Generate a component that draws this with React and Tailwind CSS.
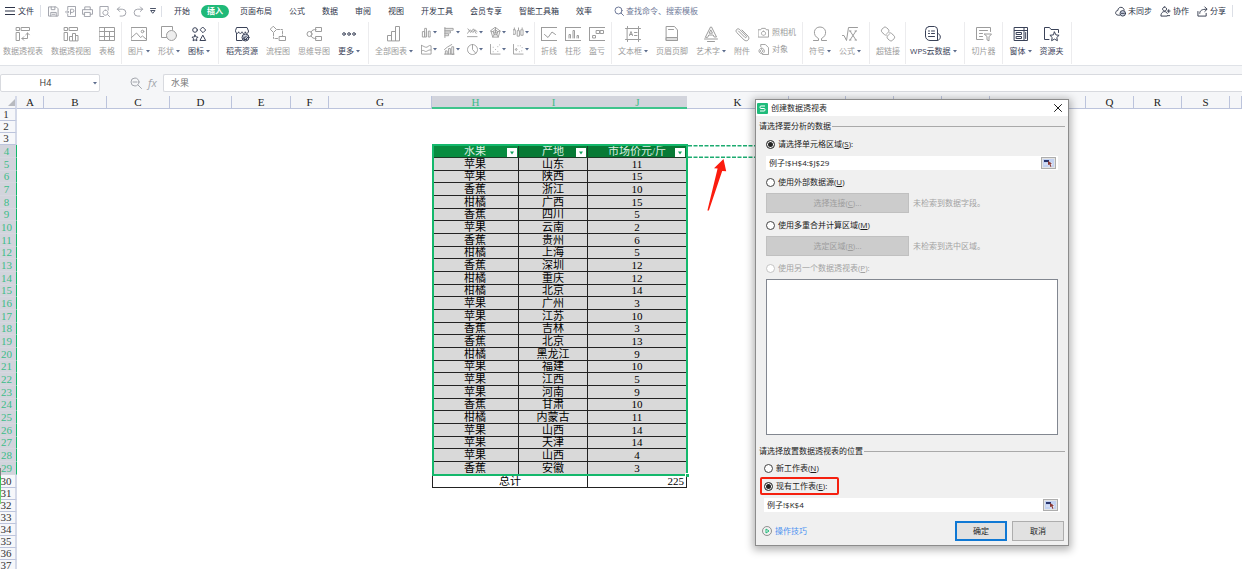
import clsx from "clsx";

const rows = [
  ["苹果", "山东", 11],
  ["苹果", "陕西", 15],
  ["香蕉", "浙江", 10],
  ["柑橘", "广西", 15],
  ["香蕉", "四川", 5],
  ["苹果", "云南", 2],
  ["香蕉", "贵州", 6],
  ["柑橘", "上海", 5],
  ["香蕉", "深圳", 12],
  ["柑橘", "重庆", 12],
  ["柑橘", "北京", 14],
  ["苹果", "广州", 3],
  ["苹果", "江苏", 10],
  ["香蕉", "吉林", 3],
  ["香蕉", "北京", 13],
  ["柑橘", "黑龙江", 9],
  ["苹果", "福建", 10],
  ["苹果", "江西", 5],
  ["苹果", "河南", 9],
  ["香蕉", "甘肃", 10],
  ["柑橘", "内蒙古", 11],
  ["苹果", "山西", 14],
  ["苹果", "天津", 14],
  ["苹果", "山西", 4],
  ["香蕉", "安徽", 3],
];

const columns = [
  { name: "A", width: "w-[27px]" },
  { name: "B", width: "w-[63px]" },
  { name: "C", width: "w-[63px]" },
  { name: "D", width: "w-[62px]" },
  { name: "E", width: "w-[59px]" },
  { name: "F", width: "w-[38px]" },
  { name: "G", width: "w-[103px]" },
  { name: "H", width: "w-[87px]", selected: true },
  { name: "I", width: "w-[69px]", selected: true },
  { name: "J", width: "w-[99px]", selected: true },
  { name: "K", width: "w-[102px]" },
  // L to P stay unlabelled, they sit under the dialog
  { name: "", width: "w-[57px]" },
  { name: "", width: "w-[48px]" },
  { name: "", width: "w-[48px]" },
  { name: "", width: "w-[48px]" },
  { name: "", width: "w-[96px]" },
  { name: "Q", width: "w-[48px]" },
  { name: "R", width: "w-[48px]" },
  { name: "S", width: "w-[48px]" },
  { name: "", width: "w-auto" },
];

function Svg({ className = "w-4 h-4", box = "0 0 16 16", children }) {
  return (
    <svg
      className={clsx("shrink-0", className)}
      viewBox={box}
      fill="none"
      stroke="currentColor"
      strokeWidth="1"
      strokeLinecap="round"
      strokeLinejoin="round"
      aria-hidden="true"
    >
      {children}
    </svg>
  );
}

function Caret() {
  return (
    <svg className="w-1 h-1 shrink-0" viewBox="0 0 4 4" aria-hidden="true">
      <path d="M0 1h4L2 3.4z" fill="#5b6b8c" />
    </svg>
  );
}

const icons = {
  pivotTable: (
    <>
      <path d="M1.5 1.5h3v3h-3zM6.5 1.5h8v3h-8zM1.5 6.5h3v8h-3z" />
      <path d="M7 12.5h5.5V7M8.8 10.7 7 12.5l1.8 1.8M10.7 8.8 12.5 7l1.8 1.8" />
    </>
  ),
  pivotChart: (
    <>
      <path d="M1.5 1.5h3v3h-3zM6.5 1.5h8v3h-8zM1.5 6.5h3v8h-3z" />
      <path d="M6.5 14.5v-4h3v4zM9.5 14.5v-7h3v7zM12.5 14.5V9.5h2.5v5z" />
    </>
  ),
  table: <path d="M.5 1.5h15v13H.5zM.5 5.5h15M.5 10.5h15M5.5 1.5v13M10.5 5.5v9" />,
  picture: (
    <>
      <path d="M.5 1.5h15v13H.5z" />
      <path d="m.5 11.5 5-4.5 4 4.5 2-1.5 4 3.5" />
      <circle cx="11.5" cy="5.5" r="1.3" />
    </>
  ),
  shapes: (
    <>
      <path d="M6 11.5H.5v-11h11v3" />
      <circle cx="10.5" cy="9.5" r="5" fill="#eee" />
    </>
  ),
  iconSet: (
    <>
      <circle cx="4" cy="4" r="2.3" />
      <path d="m12 1.3 2.7 2.7L12 6.7 9.3 4z" />
      <path d="m4 9 .9 1.900 2.100.3-1.500 1.500.4 2.100L4 13.800l-1.900 1 .4-2.100L1 11.200l2.100-.3zM12 9.500l2.700 5H9.300z" />
    </>
  ),
  store: (
    <>
      <path d="M2.5 7.5v7H8M3 1.5h10l1.5 3.5c0 3-3 3-3.200.8C11 8 8.200 8 8 5.800 7.800 8 5 8 4.700 5.800 4.500 8 1.500 8 1.500 5z" />
      <circle cx="11.5" cy="11.5" r="3.5" fill="#cdd2dd" />
      <path d="m9.5 13 3-3M11 14l3-3M10 11v2.5h2.5" />
    </>
  ),
  flow: (
    <>
      <path d="M3.5.5l3 3-3 3-3-3zM9.5 10.5h6v4h-6z" />
      <path d="M7.5 3.5h5V9.5M3.5 7.5v5h5" strokeDasharray="2 1.5" />
    </>
  ),
  mind: (
    <>
      <circle cx="3.5" cy="8" r="2.5" />
      <path d="M10 1.5h5.5v4H10zM10 10.5h5.5v4H10zM5 6c1-2 2.5-2.5 5-2.5M5 10c1 2 2.5 2.5 5 2.5" />
    </>
  ),
  more: (
    <>
      <circle cx="3" cy="8" r="1.3" />
      <circle cx="8" cy="8" r="1.3" />
      <circle cx="13" cy="8" r="1.3" />
    </>
  ),
  bars: <path d="M1.5 14.5v-5h4v5zM5.5 14.5V5.5h4v9zM9.5 14.5V.5h4v14z" />,
  sparkLine: <path d="M0 1.5h16M.5 1.5v13M0 14.5h16M3.5 8.5 7 11.5l4-5.5 3.5 2.5" />,
  sparkBar: <path d="M0 1.5h16M.5 1.5v13M0 14.5h16M4 12V8.5h1.5V12M8 12V4.5h1.5V12M12 12V9.5h1.5V12" />,
  winLoss: <path d="M0 1.5h16M.5 1.5v13M0 14.5h16M4 9.5h2.5V12H4zM7.5 4.5h3v3h-3zM11.5 4.5h3v3h-3z" />,
  textBox: (
    <>
      <path d="M2.5 2.5h11v11h-11zM.5 2.5h2v-2M15.5 2.5h-2v-2M.5 13.5h2v2M15.5 13.5h-2v2" />
      <path d="M4.5 9.5 6 5.5l1.5 4M5 8.5h2M9.5 6.5h2.5M9.5 9.5h2.5" />
    </>
  ),
  headerFooter: (
    <>
      <path d="M2.5.5H10.5L13.5 4v10.5h-11z" />
      <path d="M4.5 3.5h5M2.5 11.5h11v3h-11z" fill="#ddd" />
    </>
  ),
  wordArt: <path d="M2.5 11 7.5 1h1l5 10h-2.3l-1-2H5.8l-1 2zM6.5 7.2h3L8 4.2zM1.5 13h13M4.5 15.5h7" />,
  clip: <path d="m4.5 5 6.300 6.300c1 1 2.300-.3 1.400-1.300L5.700 3.500c-2-2-5 .8-3 3l7.300 7.300c3 2.700 6.500-.8 4-3.700L8 4" />,
  omega: <path d="M1.5 14.5h5v-2C.2 9.500 1.500 1 8 1s7.800 8.500 1.500 11.500v2h5" />,
  formula: <path d="M.5 9.5H2L4.5 14.5 6.5 1.5H15.5M8 5l6 9M14 5 8 14M7.5 5H9M13 5h1.5M7.5 14H9M13 14h1.5" />,
  link: (
    <>
      <path d="M7 7.500 8.200 6.300c1-1 .9-2.200 0-3.100L6.500 1.700C5.500.8 4.300.9 3.500 1.700L2 3.300c-.9.9-.8 2.200.1 3.100l2.400 2.200c.7.6 1.500.7 2.200.4" />
      <path d="M9 8.500 7.800 9.700c-1 1-.9 2.200 0 3.100l1.700 1.500c1 .9 2.200.8 3 0l1.500-1.600c.9-.9.8-2.200-.1-3.100l-2.400-2.200c-.7-.6-1.500-.7-2.200-.4" />
    </>
  ),
  cloudData: (
    <>
      <path d="M4 .5h5.500a3.500 3.500 0 0 1 3 3.500v10.500H5a4.500 4.500 0 0 1-4.500-4.500V4.500a4 4 0 0 1 3.500-4zM12.500 7.500c4 .3 4 7-.5 7" />
      <path d="M3.500 5h1M6.500 5h3M3.500 7.500h1M6.500 7.500h3M3.500 10.500h6" />
    </>
  ),
  slicer: (
    <>
      <path d="M7 13.5H.5V1.5h14v4M3.5 4.5h8M3.5 7.5h3M3.5 10.5h3" />
      <path d="M8.5 8h7l-2.5 2.8v4l-2-1v-3z" />
    </>
  ),
  form: (
    <>
      <path d="M1.5 1.5h13v13h-13zM1.5 4.5h13M11 1.5v13M12.7 6.5v6" />
      <path d="M3.5 6.5h5v2h-5zM3.5 10.5h5v2h-5z" />
    </>
  ),
  folder: (
    <>
      <path d="M5 13.5H.5v-12h5l1.5 2h7.5v3" />
      <path d="m10.5 6 1.400 2.900 3.200.4-2.300 2.200.6 3.200-2.900-1.600-2.900 1.600.6-3.200-2.300-2.200 3.200-.4z" />
    </>
  ),
};

const miniIcons = [
  <path d="M1.5 10.5V5h2.5v5.5zM4 10.5V1.5h2v9zM8 10.5v-6h2v6z" />,
  <path d="M1 .5v11M1 1.5h9v2H1M1 4.5h6v2H1M1 7.5h4v2H1" />,
  <path d="m.5 7 3-4 3 3 2-3 2.5 2M1 2l3 4 3-4 3 5M.5 10.5h10.5" />,
  <path d="m6 .5 5 3.8L9 11H3L1 4.3zM6 3l2.5 2-1 3.5h-3L3.5 5zM6 .5V6l5-1.5M6 6l3 5M6 6l-3 5M6 6 1 4.5" />,
  <path d="M1.5 1v2M.5 3h2v5h-2zM6 1v2M5 4h2v6H5zM10 1v1M9 3h2v6H9z" />,
  <path d="M.5 1.5v9.500h10.500v-9C8 .5 7.500 4.500 5 3.500S2 2 .5 1.500M.5 8c2-3 3.500 1 5.500 0s3-2 5-1.500" />,
  <path d="M1.5 11V7.5h2V11M5 11V5h2v6M8.5 11V3h2v8zM.5 6l3-2.5L8.5.5M.5 11h10.5" />,
  <path d="M6 .5a5.500 5.500 0 1 0 .01 0M6 .5V6l3.500 4" />,
  <path d="M.5.5V11H11M3.5 8.5v.01M6 6v.01M3.5 3.5v.01M8.5 8v.01M8.5 3v.01M10.5 1v.01" />,
  <path d="M.5.5V11H11M3.500 5a1 1 0 1 0 .01 0M8 2v.01M7 8.500v.01M9.500 7.500v.01M10 4v.01M5.500 2v.01" />,
];

const tabsBefore = ["开始"];
const tabsAfter = ["页面布局", "公式", "数据", "审阅", "视图", "开发工具", "会员专享", "智能工具箱", "效率"];

function Tool({ icon, label, menu, active }) {
  return (
    <button
      className={clsx(
        "flex flex-col items-center gap-1 whitespace-nowrap",
        active ? "text-[#3a4258]" : "text-[#9c9c9c]"
      )}
    >
      <Svg>{icons[icon]}</Svg>
      <span className="flex items-center gap-[2px] text-[8px] leading-[10px]">
        {label}
        {menu && <Caret />}
      </span>
    </button>
  );
}

function Group({ className, children }) {
  return (
    <div className={clsx("flex items-start gap-2 pt-1 h-[42px] shrink-0 border-r border-[#ececee]", className)}>
      {children}
    </div>
  );
}

function TitleBar() {
  return (
    <header className="flex items-center h-[22px] text-[8px] leading-[12px] whitespace-nowrap text-[#2d3448]">
      <button className="flex items-center gap-[3px] pl-[5px] pr-1.5 border-r border-[#dcdfe6]">
        <Svg className="w-2.5 h-2.5" box="0 0 10 10">
          <path d="M0 1.5h10M0 5h10M0 8.5h10" />
        </Svg>
        文件
      </button>
      <div className="flex items-center gap-[6px] pl-[7px] pr-[5px] text-[#9a9da5] border-r border-[#dcdfe6]">
        <button aria-label="保存">
          <Svg className="w-[11px] h-[11px]" box="0 0 12 12">
            <path d="M1 1h8l2 2v8H1zM3.5 1v3h4V1M3 11V7h6v4M4.5 9h3" />
          </Svg>
        </button>
        <button aria-label="输出">
          <Svg className="w-[11px] h-[11px]" box="0 0 12 12">
            <path d="M3 4V.5h8.500v11H3V9M0 6.500h4M2.500 5 4 6.500 2.500 8M6 9V3.500h2a1.500 1.500 0 0 1 0 3.500H6" />
          </Svg>
        </button>
        <button aria-label="打印">
          <Svg className="w-[11px] h-[11px]" box="0 0 12 12">
            <path d="M3 4V1h6v3M3 9H.5V4h11v5H9M3 7h6v4.5H3z" />
          </Svg>
        </button>
        <button aria-label="打印预览">
          <Svg className="w-[11px] h-[11px]" box="0 0 12 12">
            <path d="M5 11.500H1V.5h9v4M9.500 9.500l2 2M7 4.500a2.800 2.800 0 1 0 .01 0" />
          </Svg>
        </button>
        <button aria-label="撤销">
          <Svg className="w-[11px] h-[11px]" box="0 0 12 12">
            <path d="M4 1 1.500 3.500 4 6M1.500 3.500H7a3.500 3.500 0 0 1 0 7.500H4.500" />
          </Svg>
        </button>
        <button aria-label="重做">
          <Svg className="w-[11px] h-[11px]" box="0 0 12 12">
            <path d="m8 1 2.500 2.500L8 6M10.500 3.500H5A3.500 3.500 0 0 0 5 11h2.500" />
          </Svg>
        </button>
        <button aria-label="自定义" className="text-[#4c5468]">
          <Svg className="w-[6px] h-[6px]" box="0 0 6 6">
            <path d="M.5.5h5M1 2.5h4L3 5z" />
          </Svg>
        </button>
      </div>
      <nav className="flex items-center gap-[5px] pl-[6px]">
        {tabsBefore.map((tab) => (
          <button key={tab} className="px-1.5">
            {tab}
          </button>
        ))}
        <button className="px-1.5 h-[13px] rounded-full bg-[#1fb978] text-white font-bold">插入</button>
        {tabsAfter.map((tab) => (
          <button key={tab} className="px-1.5">
            {tab}
          </button>
        ))}
      </nav>
      <label className="flex items-center gap-[2px] pl-4 text-[#6f7a99]">
        <Svg className="w-[10px] h-[10px]" box="0 0 10 10">
          <circle cx="4.5" cy="4.5" r="3.5" />
          <path d="m7 7 2.5 2.5" />
        </Svg>
        <input
          aria-label="搜索"
          placeholder="查找命令、搜索模板"
          className="w-20 outline-none placeholder:text-[#6f7a99] placeholder:opacity-100"
        />
      </label>
      <div className="flex items-center gap-2 ml-auto mr-[9px] pr-1.5 border-r border-[#dcdfe6]">
        <button className="flex items-center gap-[2px]">
          <Svg className="w-[11px] h-[11px]" box="0 0 12 12">
            <path d="M5 10H3.5C-.3 10 0 5 3 5c.3-5 7-4.5 7-.5" />
            <circle cx="8.5" cy="8" r="3" fill="#cfd5e4" />
            <path d="M7 8h3" />
          </Svg>
          未同步
        </button>
        <button className="flex items-center gap-[2px]">
          <Svg className="w-[11px] h-[11px]" box="0 0 12 12">
            <path d="M5 1a2.200 2.200 0 1 0 .01 0M7.500 11H1c0-6 6-6 7-3M9.500 4v3M8 5.500h3M8 10.500h2.500" />
          </Svg>
          协作
        </button>
        <button className="flex items-center gap-[2px]">
          <Svg className="w-[11px] h-[11px]" box="0 0 12 12">
            <path d="M1 6v5h9V8M3 8c0-3 2-4.5 7.5-4.5M8.5 1 11 3.5 8.5 6" />
          </Svg>
          分享
        </button>
      </div>
    </header>
  );
}

function Ribbon() {
  return (
    <div className="flex h-[44px] border-b border-[#dfe2e7]">
      <Group className="pl-[3px] pr-1.5">
        <Tool icon="pivotTable" label="数据透视表" />
        <Tool icon="pivotChart" label="数据透视图" />
        <Tool icon="table" label="表格" />
      </Group>
      <Group className="pl-1.5 pr-2">
        <Tool icon="picture" label="图片" menu />
        <Tool icon="shapes" label="形状" menu />
        <Tool icon="iconSet" label="图标" menu active />
      </Group>
      <Group className="pl-[7px] pr-2">
        <Tool icon="store" label="稻壳资源" active />
        <Tool icon="flow" label="流程图" />
        <Tool icon="mind" label="思维导图" />
        <Tool icon="more" label="更多" menu active />
      </Group>
      <Group className="pl-1.5 pr-[5px]">
        <Tool icon="bars" label="全部图表" menu />
        <div className="grid grid-cols-5 gap-x-[7px] gap-y-[5px] text-[#9c9c9c]">
          {miniIcons.map((shape, i) => (
            <button key={i} aria-label={`图表 ${i + 1}`} className="flex items-center gap-px w-4 h-3">
              <Svg className="w-[11px] h-[11px]" box="0 0 12 12">
                {shape}
              </Svg>
              <Caret />
            </button>
          ))}
        </div>
      </Group>
      <Group className="pl-1.5 pr-1.5">
        <Tool icon="sparkLine" label="折线" />
        <Tool icon="sparkBar" label="柱形" />
        <Tool icon="winLoss" label="盈亏" />
      </Group>
      <Group className="pl-1.5 pr-1.5">
        <Tool icon="textBox" label="文本框" menu />
        <Tool icon="headerFooter" label="页眉页脚" />
        <Tool icon="wordArt" label="艺术字" menu />
        <Tool icon="clip" label="附件" />
        <div className="flex flex-col gap-[5px] text-[8px] leading-3 text-[#9c9c9c]">
          <button className="flex items-center gap-[3px]">
            <Svg className="w-[11px] h-[11px]" box="0 0 12 12">
              <path d="M.5 3H3l1-1.500h4L9 3h2.500v8H.5zM6 4.500a2.300 2.300 0 1 0 .01 0" />
            </Svg>
            照相机
          </button>
          <button className="flex items-center gap-[3px]">
            <Svg className="w-[11px] h-[11px]" box="0 0 12 12">
              <path d="M3 3V.5h5L11.500 4v7.500H5M4 4.500a3 3 0 1 0 .01 0M2.500 7.500 4 6l1.500 1.500L4 9z" />
            </Svg>
            对象
          </button>
        </div>
      </Group>
      <Group className="pl-1.5 pr-2">
        <Tool icon="omega" label="符号" menu />
        <Tool icon="formula" label="公式" menu />
      </Group>
      <Group className="pl-1.5 pr-[5px]">
        <Tool icon="link" label="超链接" />
      </Group>
      <Group className="pl-1 pr-[7px]">
        <Tool icon="cloudData" label="WPS云数据" menu active />
      </Group>
      <Group className="pl-[7px] pr-1.5">
        <Tool icon="slicer" label="切片器" />
      </Group>
      <Group className="pl-[7px] pr-[7px]">
        <Tool icon="form" label="窗体" menu active />
        <Tool icon="folder" label="资源夹" active />
      </Group>
    </div>
  );
}

function FormulaBar() {
  return (
    <div className="flex items-center h-[30px] pb-[1px] pt-1 bg-[#f5f6f8] text-[9px] leading-3">
      <div className="flex items-center w-[100px] h-[18px] pr-[2px] bg-white border border-[#d8dadf] rounded-[2px]">
        <input
          aria-label="名称框"
          defaultValue="H4"
          className="flex-1 min-w-0 pr-[3px] text-center text-[#333] outline-none"
        />
        <Caret />
      </div>
      <div className="flex items-center gap-1.5 pl-[30px] pr-[5px] text-[#a3a6ad]">
        <Svg className="w-3 h-3" box="0 0 12 12">
          <circle cx="5" cy="5" r="4" />
          <path d="m8 8 3.5 3.5M3 5h4" />
        </Svg>
        <i className="w-2.5 font-['Open_Sans',sans-serif] text-[11px]">fx</i>
      </div>
      <input
        aria-label="编辑栏"
        defaultValue="水果"
        className="flex-1 min-w-0 h-[18px] px-[7px] bg-white border border-r-0 border-[#d8dadf] rounded-l-[2px] text-[#777] outline-none"
      />
    </div>
  );
}

function RowHead({ n, children }) {
  const selected = n >= 4 && n <= 29;
  return (
    <th
      scope="row"
      className={clsx(
        "relative p-0 pr-[3px] font-normal border-b",
        selected
          ? "bg-[#d2d4dc] text-[#3cbc88] border-b-[#d6d8e0] border-r border-r-[#14b86c]"
          : "bg-[#f6f7fa] text-[#333] border-b-[#bcc4dc] border-r-2 border-r-[#d4d9e8]"
      )}
    >
      {n}
      {children}
    </th>
  );
}

const dataCell = "p-0 bg-[#d9d9d9] border-b border-r border-[#222] text-center text-black";

function FilterHead({ label, className, children }) {
  return (
    <td className={clsx("relative p-0 border-b border-r border-[#1c3a26] text-center text-[#dcefe2]", className)}>
      {label}
      <button
        aria-label={`筛选${label}`}
        className="absolute right-[1px] top-[3px] flex items-center justify-center w-2.5 h-[9px] bg-white"
      >
        <svg className="w-1 h-1" viewBox="0 0 4 4" aria-hidden="true">
          <path d="M0 .5h4L2 3.5z" fill="#12a35c" />
        </svg>
      </button>
      {children}
    </td>
  );
}

function Sheet() {
  // repeats 13/13/12 inside the data block, as its rows are slightly taller
  const rowHeight = (n) => {
    if (n < 4 || n > 30) return "h-3";
    return (n - 4) % 3 === 2 && n < 30 ? "h-3" : "h-[13px]";
  };

  return (
    <table className="w-full table-fixed border-separate border-spacing-0 text-[11px] leading-[11px] font-['Liberation_Serif','Noto_Sans_CJK_SC',serif]">
      <colgroup>
        <col className="w-[17px]" />
        {columns.map((c, i) => (
          <col key={i} className={c.width} />
        ))}
      </colgroup>
      <thead>
        <tr className="h-[13px] bg-[#f5f6f8]">
          <th className="p-0 border-b border-r-2 border-b-[#bcc4dc] border-r-[#d4d9e8]" aria-label="全选">
            <svg className="w-[7px] h-[7px] ml-auto" viewBox="0 0 7 7" aria-hidden="true">
              <path d="M7 0v7H0z" fill="#b8babf" />
            </svg>
          </th>
          {columns.map((c, i) => (
            <th
              key={i}
              scope="col"
              className={clsx(
                "p-0 pt-px font-normal border-b",
                c.selected
                  ? "bg-[#d2d4dc] text-[#3cbc88] border-[#3fc48c] shadow-[inset_0_-1px_0_#3fc48c]"
                  : "text-[#222] border-r border-[#bcc4dc]"
              )}
            >
              {c.name}
            </th>
          ))}
        </tr>
      </thead>
      <tbody>
        {[1, 2, 3].map((n) => (
          <tr key={n} className={rowHeight(n)}>
            <RowHead n={n} />
            <td colSpan={20} className="p-0" />
          </tr>
        ))}
        <tr className={rowHeight(4)}>
          <RowHead n={4} />
          <td colSpan={7} className="p-0" />
          <FilterHead label="水果" className="bg-[#088c40]">
            {/* selection frame over H4:J29 */}
            <span className="absolute z-10 left-0 -top-px w-[256px] h-[332px] border-2 border-[#14b86c] pointer-events-none">
              <span className="absolute -right-[3px] -bottom-[3px] w-1 h-1 bg-[#14b86c] border-l border-t border-white" />
            </span>
          </FilterHead>
          <FilterHead label="产地" className="bg-[#077a35]" />
          <FilterHead label="市场价元/斤" className="bg-[#077a35]" />
          <td className="relative p-0">
            <svg className="absolute left-0 top-0 w-full h-[13px]" fill="none" stroke="#1cab70" aria-hidden="true">
              <path d="M1 .8h101M1 12.2h101" strokeWidth="1.6" strokeDasharray="4 1.5" />
            </svg>
            <svg className="absolute left-5 top-3.5 w-5 h-[53px]" viewBox="0 0 20 53" aria-hidden="true">
              <path d="M16.5 0 7 9.2l3.6.3L.4 51.5h1.5L15.2 12l4 .2z" fill="#fb1c0e" />
            </svg>
          </td>
          <td colSpan={9} className="p-0" />
        </tr>
        {rows.map(([fruit, place, price], i) => (
          <tr key={i} className={rowHeight(i + 5)}>
            <RowHead n={i + 5}>
              {i === rows.length - 1 && (
                <span className="absolute z-10 left-0 top-1.5 w-px h-9 bg-linear-to-b from-[#808080] from-20% via-[#12c456] via-25% to-[#7be07b]" />
              )}
            </RowHead>
            <td colSpan={7} className="p-0" />
            <td className={dataCell}>{fruit}</td>
            <td className={dataCell}>{place}</td>
            <td className={dataCell}>{price}</td>
            <td colSpan={10} className="p-0" />
          </tr>
        ))}
        <tr className={rowHeight(30)}>
          <RowHead n={30} />
          <td colSpan={7} className="p-0" />
          <td colSpan={2} className="p-0 border border-t-0 border-[#222] text-center">
            总计
          </td>
          <td className="p-0 pr-[2px] border-b border-r border-[#222] text-right">225</td>
          <td colSpan={10} className="p-0" />
        </tr>
        {[31, 32, 33, 34, 35, 36, 37].map((n) => (
          <tr key={n} className={rowHeight(n)}>
            <RowHead n={n} />
            <td colSpan={20} className="p-0" />
          </tr>
        ))}
      </tbody>
    </table>
  );
}

function Legend({ children }) {
  return (
    <h3 className="flex items-center gap-[1px] pl-[3px] pr-[3px] h-3 whitespace-nowrap">
      {children}
      <span className="flex-1 h-px bg-[#a9a9a9]" />
    </h3>
  );
}

function Option({ name, hotkey, colon, disabled, checked, children }) {
  return (
    <label className={clsx("flex items-center gap-[3px] h-3 whitespace-nowrap", disabled && "text-[#a3a3a3]")}>
      <input
        type="radio"
        name={name}
        defaultChecked={checked}
        disabled={disabled}
        className="appearance-none w-[9px] h-[9px] rounded-full border border-[#444] bg-white checked:bg-[#222] checked:shadow-[inset_0_0_0_1px_#fff] disabled:border-[#c4c4c4]"
      />
      <span>
        {children}(<u>{hotkey}</u>){colon && ":"}
      </span>
    </label>
  );
}

function RangeInput({ label, value }) {
  return (
    <div className="flex items-center h-[14px] pr-[2px] bg-white">
      <input aria-label={label} defaultValue={value} className="flex-1 min-w-0 px-[3px] outline-none" />
      <button
        aria-label={`选取${label}`}
        className="flex items-center justify-center w-[15px] h-3 border border-[#adadad] bg-[#e4e4e4]"
      >
        <svg className="w-[11px] h-2" viewBox="0 0 11 8" aria-hidden="true">
          <path d="M0 0h11v8H0z" fill="#c3d2f2" />
          <path d="M1 1h5v2H1z" fill="#28356e" />
          <path d="M6 3v5M8.5 3v5M1 5h9" stroke="#fff" strokeWidth=".5" />
          <path d="m5 2 4 2.5-1.5.5 1 2.5-1 .5-1-2.5L5 6z" fill="#8d3a34" />
        </svg>
      </button>
    </div>
  );
}

function PivotDialog() {
  const disabledButton = "w-[143px] h-5 bg-[#cccccc] border border-[#c0c0c0] text-[#9c9c9c]";
  return (
    <section
      role="dialog"
      aria-label="创建数据透视表"
      className="absolute z-20 left-[755px] top-[99px] w-[314px] border border-[#8c8c8c] bg-[#f0f0f0] shadow-[0_2px_8px_2px_rgba(0,0,0,0.3)] text-[8px] leading-3 text-[#1c1c1c]"
    >
      <div className="flex items-center h-4 pl-px pr-1.5 bg-white">
        <svg className="w-[11px] h-[11px]" viewBox="0 0 11 11" aria-hidden="true">
          <rect width="11" height="11" rx="1" fill="#1fbb7a" />
          <path d="M8 3H4a1 1 0 0 0-1 1v.5a1 1 0 0 0 1 1h3a1 1 0 0 1 1 1V7a1 1 0 0 1-1 1H3" fill="none" stroke="#fff" />
        </svg>
        <h2 className="pl-[3px]">创建数据透视表</h2>
        <button aria-label="关闭" className="ml-auto">
          <Svg className="w-2 h-2" box="0 0 8 8">
            <path d="m.5.5 7 7M7.5.5l-7 7" />
          </Svg>
        </button>
      </div>

      <div className="pt-1">
        <Legend>请选择要分析的数据</Legend>
        <div className="flex flex-col pl-2.5 pr-2.5 pt-1.5">
          <Option name="source" hotkey="S" colon checked>
            请选择单元格区域
          </Option>
          <div className="py-1.5">
            <RangeInput label="单元格区域" value="例子!$H$4:$J$29" />
          </div>
          <Option name="source" hotkey="U">
            使用外部数据源
          </Option>
          <div className="flex items-center gap-1 pt-[5px] pb-1.5 text-[#a3a3a3]">
            <button disabled className={disabledButton}>
              选择连接(<u>C</u>)...
            </button>
            未检索到数据字段。
          </div>
          <Option name="source" hotkey="M">
            使用多重合并计算区域
          </Option>
          <div className="flex items-center gap-1 pt-[5px] pb-1.5 text-[#a3a3a3]">
            <button disabled className={disabledButton}>
              选定区域(<u>R</u>)...
            </button>
            未检索到选中区域。
          </div>
          <Option name="source" hotkey="P" colon disabled>
            使用另一个数据透视表
          </Option>
          <div className="mt-[5px] h-[156px] bg-white border border-[#828790]" />
        </div>
      </div>

      <div className="pt-2.5">
        <Legend>请选择放置数据透视表的位置</Legend>
        <div className="px-2 pt-[5px]">
          <Option name="target" hotkey="N">
            新工作表
          </Option>
        </div>
        <div className="w-[79px] ml-1 mt-[3px] px-[2px] py-px border-2 border-[#f5200f] rounded-[2px]">
          <Option name="target" hotkey="E" colon checked>
            现有工作表
          </Option>
        </div>
        <div className="px-2 pt-[3px]">
          <RangeInput label="放置位置" value="例子!$K$4" />
        </div>
      </div>

      <div className="flex items-center gap-[5px] pl-1.5 pr-1 pt-[9px] pb-1">
        <a href="#tips" className="flex items-center gap-[3px] mr-auto text-[#4a90f0]">
          <svg className="w-2.5 h-2.5" viewBox="0 0 10 10" fill="none" aria-hidden="true">
            <circle cx="5" cy="5" r="4.5" stroke="#777" strokeWidth=".8" />
            <path d="M4 3v4l3-2z" stroke="#1fbb7a" />
          </svg>
          操作技巧
        </a>
        <button className="w-[52px] h-5 bg-[#e1e1e1] border-2 border-[#0f78d4]">确定</button>
        <button className="w-[52px] h-5 bg-[#e1e1e1] border border-[#adadad]">取消</button>
      </div>
    </section>
  );
}

export default function App() {
  return (
    <div className="relative h-screen overflow-hidden bg-white font-['Open_Sans','Noto_Sans_CJK_SC',sans-serif]">
      <TitleBar />
      <Ribbon />
      <FormulaBar />
      <Sheet />
      <PivotDialog />
    </div>
  );
}
